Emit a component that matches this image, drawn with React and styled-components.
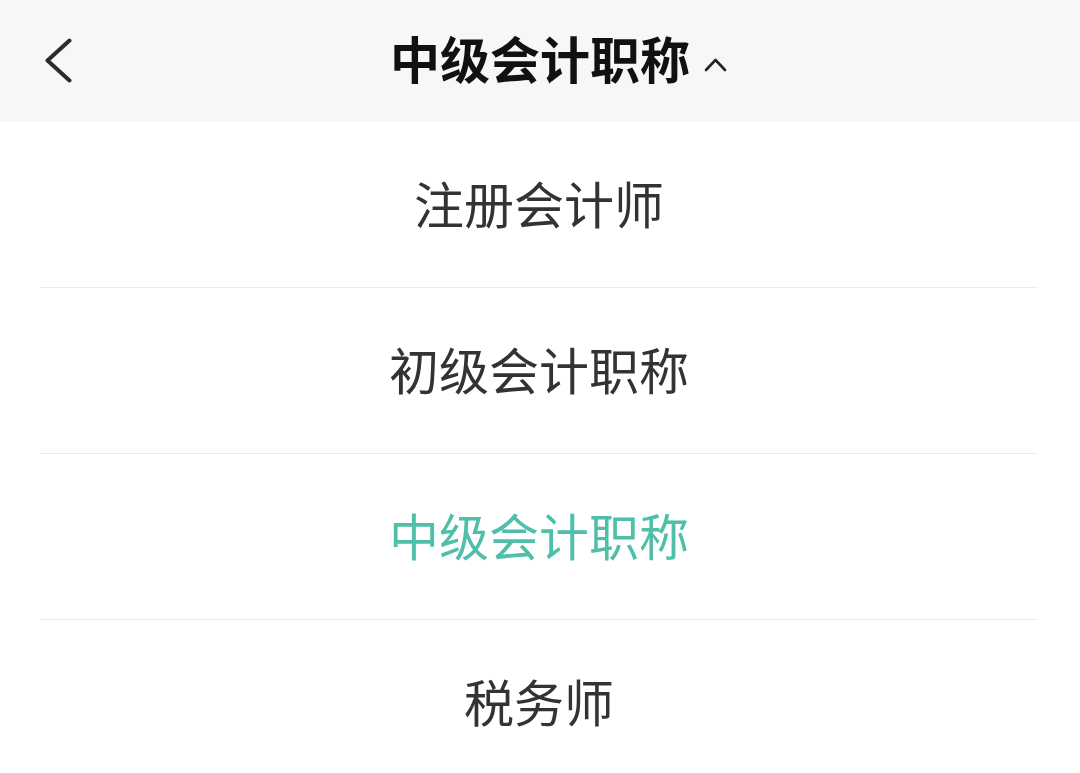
import React from "react";
import styled, { createGlobalStyle } from "styled-components";

const Global = createGlobalStyle`
  html, body { margin: 0; padding: 0; background: #ffffff; }
  body { font-family: "Noto Sans CJK SC", "Noto Sans", sans-serif; }
`;

const Page = styled.div`
  width: 1080px;
  height: 773px;
  overflow: hidden;
  background: #ffffff;
  display: flex;
  flex-direction: column;
`;

const Header = styled.header`
  flex-shrink: 0;
  height: 122px;
  background: #f6f7f9;
  display: grid;
  grid-template-columns: 1fr auto 1fr;
  align-items: center;
  box-sizing: border-box;
`;

const BackButton = styled.button`
  justify-self: start;
  border: 0;
  background: none;
  padding: 0;
  margin: 0 0 2px 45px;
  display: flex;
  width: 27px;
  height: 45px;
  cursor: pointer;
`;

const Title = styled.h1`
  margin: 0 0 8px 0;
  font-size: 50px;
  font-weight: 700;
  color: #111111;
  line-height: 1;
  letter-spacing: 0;
`;

const Caret = styled.span`
  justify-self: start;
  display: flex;
  margin-left: 14px;
  margin-top: 6px;
`;

const List = styled.ul`
  list-style: none;
  margin: 0;
  padding: 0;
  display: flex;
  flex-direction: column;
`;

const Item = styled.li`
  flex-shrink: 0;
  height: 165px;
  box-sizing: content-box;
  margin: 0 42px 0 40px;
  display: flex;
  align-items: center;
  justify-content: center;
  font-size: 50px;
  font-weight: 400;
  line-height: 1;
  padding-bottom: 0;
  color: ${(p) => (p.$active ? "#4fbfa9" : "#333333")};
  border-bottom: ${(p) => (p.$last ? "none" : "1px solid #ececec")};
`;

const ItemLabel = styled.span`
  display: block;
  margin-bottom: 6px;
`;

const items = ["注册会计师", "初级会计职称", "中级会计职称", "税务师"];

export default function App() {
  return (
    <Page>
      <Global />
      <Header>
        <BackButton aria-label="返回">
          <svg width="27" height="45" viewBox="0 0 27 45" fill="none">
            <polyline
              points="24.5,2.5 2.5,22.5 24.5,42.5"
              stroke="#2b2b2b"
              strokeWidth="4"
              strokeLinecap="round"
              strokeLinejoin="round"
            />
          </svg>
        </BackButton>
        <Title>中级会计职称</Title>
        <Caret>
          <svg width="23" height="15" viewBox="0 0 23 15" fill="none">
            <polyline
              points="2,13 11.5,3 21,13"
              stroke="#222222"
              strokeWidth="2.6"
              strokeLinecap="round"
              strokeLinejoin="round"
            />
          </svg>
        </Caret>
      </Header>
      <List>
        {items.map((t, i) => (
          <Item key={t} $active={t === "中级会计职称"} $last={i === items.length - 1}>
            <ItemLabel>{t}</ItemLabel>
          </Item>
        ))}
      </List>
    </Page>
  );
}
